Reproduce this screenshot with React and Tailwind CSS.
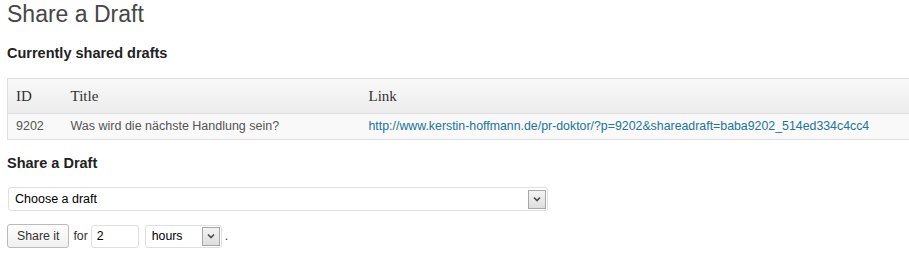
export default function App() {
  return (
    <div className="w-[909px] h-[262px] bg-white overflow-hidden font-['Liberation_Sans',Arial,sans-serif] text-[#333]">
      <div className="pl-[7px]">
        <h2 className="text-[23px] leading-[29px] text-[#464646]">Share a Draft</h2>
        <h3 className="mt-[16px] text-[14.5px] leading-[17px] font-bold text-[#222]">Currently shared drafts</h3>

        <table className="mt-[16px] w-[920px] border border-[#dfdfdf] border-collapse text-left">
          <thead>
            <tr className="bg-gradient-to-b from-[#f9f9f9] to-[#ececec] border-b border-[#dfdfdf]">
              <th className="w-[56px] pl-[8px] h-[35px] font-normal font-['Liberation_Serif',Georgia,serif] text-[15px] text-[#333]">ID</th>
              <th className="w-[298px] pl-[7px] font-normal font-['Liberation_Serif',Georgia,serif] text-[15px] text-[#333]">Title</th>
              <th className="pl-[7px] font-normal font-['Liberation_Serif',Georgia,serif] text-[15px] text-[#333]">Link</th>
            </tr>
          </thead>
          <tbody>
            <tr className="bg-[#f9f9f9]">
              <td className="pl-[8px] h-[26px] text-[12.5px] text-[#555]">9202</td>
              <td className="pl-[7px] text-[12.5px] text-[#555]">Was wird die nächste Handlung sein?</td>
              <td className="pl-[7px] text-[12.35px]">
                <a href="#" className="text-[#21759b]">http://www.kerstin-hoffmann.de/pr-doktor/?p=9202&amp;shareadraft=baba9202_514ed334c4cc4</a>
              </td>
            </tr>
          </tbody>
        </table>

        <h3 className="mt-[15px] text-[14.5px] leading-[17px] font-bold text-[#222]">Share a Draft</h3>

        <div className="mt-[15px] ml-px w-[540px] h-[24px] border border-[#dfdfdf] rounded-[3px] bg-white flex items-center justify-between pl-[6px] pr-[1px]">
          <span className="text-[12.5px] text-black">Choose a draft</span>
          <Arrow />
        </div>

        <div className="mt-[13px] flex items-center text-[12.3px]">
          <button className="h-[24px] px-[9px] border border-[#bbb] rounded-[3px] bg-gradient-to-b from-[#fefefe] to-[#f0f0f0] text-[12.3px] text-[#333]">Share it</button>
          <span className="ml-[4px] text-[#333]">for</span>
          <div className="ml-[3px] w-[48px] h-[23px] border border-[#dfdfdf] rounded-[3px] bg-white pl-[5px] flex items-center text-black">2</div>
          <div className="ml-[6px] w-[77px] h-[23px] border border-[#dfdfdf] rounded-[3px] bg-white flex items-center justify-between pl-[6px] pr-[1px]">
            <span className="text-black">hours</span>
            <Arrow />
          </div>
          <span className="ml-[3px] text-[#333]">.</span>
        </div>
      </div>
    </div>
  );
}

function Arrow() {
  return (
    <div className="w-[18px] h-[19px] border border-[#a7a7a7] bg-gradient-to-b from-[#f4f4f4] to-[#dedede] flex items-center justify-center">
      <svg width="8" height="6" viewBox="0 0 8 6">
        <path d="M1 1.5 L4 4.5 L7 1.5" stroke="#4d4d4d" strokeWidth="1.6" fill="none" />
      </svg>
    </div>
  );
}
